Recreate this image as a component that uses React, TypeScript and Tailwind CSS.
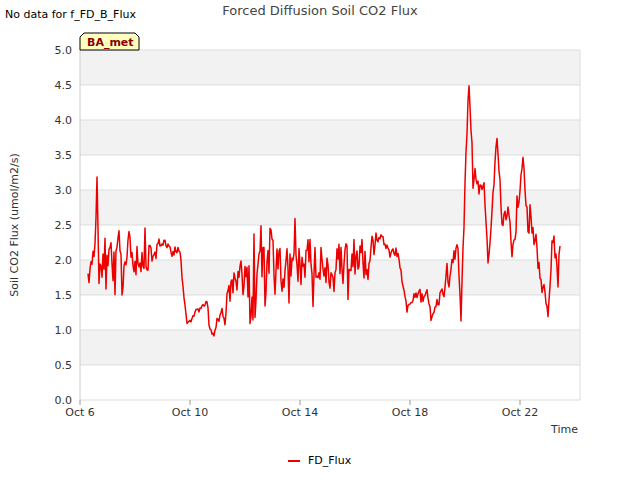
import React from "react";

const knots: [number, number, number][] = [
  [88, 2.0, 0.3], [95, 2.1, 0.35], [97, 3.2, 0], [99, 1.7, 0.1], [105, 2.1, 0.45], [110, 2.0, 0.45],
  [120, 2.05, 0.5], [135, 2.0, 0.45], [150, 2.0, 0.4], [160, 2.25, 0.15], [170, 2.2, 0.12],
  [180, 2.1, 0.1], [183, 1.6, 0.05], [187, 1.1, 0.02], [192, 1.15, 0.05], [197, 1.3, 0.07],
  [207, 1.3, 0.1], [212, 0.95, 0.05], [220, 1.2, 0.2], [230, 1.5, 0.3], [240, 1.75, 0.5],
  [250, 1.7, 0.55], [265, 1.95, 0.55], [275, 1.8, 0.5], [290, 2.0, 0.55], [310, 1.95, 0.55],
  [330, 1.9, 0.55], [350, 2.0, 0.5], [370, 2.1, 0.5], [380, 2.3, 0.12], [390, 2.15, 0.1],
  [400, 2.0, 0.1], [407, 1.3, 0.1], [415, 1.5, 0.12], [425, 1.55, 0.12], [432, 1.2, 0.1],
  [440, 1.5, 0.15], [450, 1.8, 0.25], [458, 2.2, 0.3], [461, 1.2, 0.1], [466, 3.5, 0.4],
  [469, 4.5, 0.1], [473, 3.3, 0.25], [480, 3.0, 0.2], [485, 2.8, 0.25], [488, 1.9, 0.1],
  [495, 3.3, 0.2], [497, 3.7, 0.05], [502, 2.6, 0.25], [508, 2.7, 0.25], [512, 2.0, 0.1],
  [518, 2.8, 0.25], [523, 3.5, 0.1], [528, 2.5, 0.3], [535, 2.3, 0.35], [542, 1.6, 0.2],
  [548, 1.2, 0.1], [553, 2.4, 0.4], [558, 2.0, 0.35], [560, 2.2, 0.1],
];

function buildPath() {
  let seed = 11;
  const rnd = () => {
    seed = (seed * 16807) % 2147483647;
    return seed / 2147483647;
  };
  const pts: string[] = [];
  let n = 0;
  for (let x = 88; x <= 560; x += 1) {
    let i = 0;
    while (i < knots.length - 2 && knots[i + 1][0] < x) i++;
    const [x0, v0, a0] = knots[i];
    const [x1, v1, a1] = knots[i + 1];
    const t = Math.min(1, Math.max(0, (x - x0) / (x1 - x0)));
    const v = v0 + (v1 - v0) * t;
    const a = a0 + (a1 - a0) * t;
    const r = (rnd() - 0.5) * 2 * a;
    n = 0.35 * n + 0.65 * r;
    if (rnd() < 0.08) n = (rnd() < 0.5 ? 1 : -1) * a * 1.1;
    const y = 400 - (v + n) * 70;
    pts.push(`${x.toFixed(1)},${y.toFixed(1)}`);
  }
  return "M" + pts.join(" L");
}

const d = buildPath();

export default function App() {
  const font = { fontFamily: '"DejaVu Sans", sans-serif' };
  const yTicks = [0, 0.5, 1, 1.5, 2, 2.5, 3, 3.5, 4, 4.5, 5];
  const xTicks = [["Oct 6", 80], ["Oct 10", 190], ["Oct 14", 300], ["Oct 18", 410], ["Oct 22", 520]] as const;
  return (
    <div className="w-[640px] h-[480px] bg-white" style={font}>
      <svg width={640} height={480} className="block">
        {[0, 1, 2, 3, 4].map((i) => (
          <rect key={i} x={80} y={50 + i * 70} width={500} height={35} fill="#f2f2f2" />
        ))}
        {yTicks.map((v) => (
          <g key={v}>
            <line x1={80} x2={580} y1={400 - v * 70} y2={400 - v * 70} stroke="#dddddd" strokeWidth={1} />
            <text x={72} y={404 - v * 70} fontSize={11} fill="#333" textAnchor="end">{v.toFixed(1)}</text>
          </g>
        ))}
        <line x1={80} x2={80} y1={50} y2={400} stroke="#cccccc" />
        <line x1={580} x2={580} y1={50} y2={400} stroke="#dddddd" />
        {xTicks.map(([l, x]) => (
          <g key={l}>
            <line x1={x} x2={x} y1={400} y2={405} stroke="#999" />
            <text x={x} y={416} fontSize={11} fill="#333" textAnchor="middle">{l}</text>
          </g>
        ))}
        <path d={d} fill="none" stroke="#ee0000" strokeWidth={1.5} strokeLinejoin="round" />
        <text x={320} y={15} fontSize={13} fill="#444" textAnchor="middle">Forced Diffusion Soil CO2 Flux</text>
        <text x={5} y={18} fontSize={11} fill="#000">No data for f_FD_B_Flux</text>
        <path d="M84,33 L135,33 L139,37 L139,50 L80,50 L80,37 Z" fill="#ffffc0" stroke="#000" strokeWidth={1} />
        <text x={87} y={46} fontSize={11} fontWeight="bold" fill="#8b0000">BA_met</text>
        <text x={578} y={433} fontSize={11} fill="#333" textAnchor="end">Time</text>
        <text x={0} y={0} fontSize={11} fill="#333" textAnchor="middle" transform="translate(18,225) rotate(-90)">Soil CO2 Flux (umol/m2/s)</text>
        <line x1={288} x2={300} y1={461} y2={461} stroke="#ee0000" strokeWidth={2} />
        <text x={308} y={464} fontSize={11} fill="#000">FD_Flux</text>
      </svg>
    </div>
  );
}
